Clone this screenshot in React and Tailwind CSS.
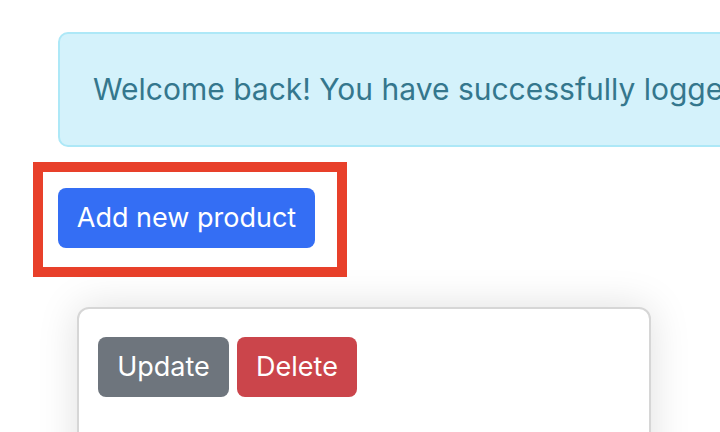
export default function App() {
  return (
    <main
      className="relative w-[720px] h-[432px] overflow-hidden bg-white flex flex-col"
      style={{ fontFamily: 'Inter, "Noto Sans", sans-serif' }}
    >
      <div className="ml-[58px] mt-[32px] w-[800px] h-[115px] shrink-0 flex items-center pl-[33px] border-2 border-[#ade8f7] rounded-[10px] bg-[#d4f2fb] text-[#34778d] text-[30px] whitespace-nowrap">
        Welcome back! You have successfully logged in.
      </div>

      <section className="mt-[15px] ml-[33px] w-[314px] h-[115px] shrink-0 border-[10px] border-[#e8402a] pl-[15px] pt-[16px]">
        <button className="w-[257px] h-[60px] rounded-[8px] bg-[#346ef4] text-white text-[27px] flex items-center justify-center">
          Add new product
        </button>
      </section>

      <article className="mt-[30px] ml-[77px] w-[574px] h-[200px] shrink-0 border-2 border-[#d6d6d6] rounded-[12px] bg-white shadow-[0_0_40px_rgba(0,0,0,0.13)] pt-[28px] pl-[19px] flex items-start gap-[8px]">
        <button className="w-[131px] h-[60px] rounded-[8px] bg-[#6e757d] text-white text-[27px] flex items-center justify-center">
          Update
        </button>
        <button className="w-[120px] h-[60px] rounded-[8px] bg-[#cb454b] text-white text-[27px] flex items-center justify-center">
          Delete
        </button>
      </article>
    </main>
  )
}
